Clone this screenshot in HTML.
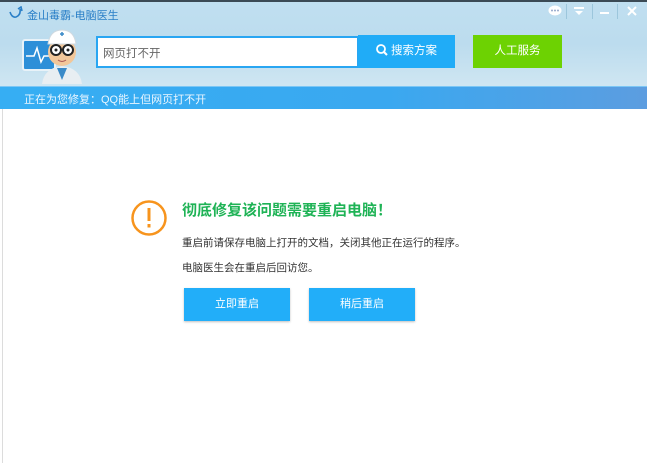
<!DOCTYPE html>
<html><head><meta charset="utf-8"><style>
*{margin:0;padding:0;box-sizing:border-box}
body{width:647px;height:463px;overflow:hidden;background:#fff;font-family:"Liberation Sans","Noto Sans CJK SC",sans-serif;position:relative}
.hdr{position:absolute;left:0;top:0;width:647px;height:86px;background:linear-gradient(180deg,#c0dff0 0%,#bcdcee 50%,#cfe6f2 100%);border-top:2px solid #3b4a55}
.title{position:absolute;left:27px;top:5px;font-size:11px;color:#2a7fc7}
.bar{position:absolute;left:0;top:86px;width:647px;height:23px;background:linear-gradient(90deg,#36aef3,#3aa8f0 60%,#5c9de0);border-top:1px solid #7cc7f5}
.bar span{position:absolute;left:24px;top:4px;font-size:11px;color:#eaf6ff}
.inp{position:absolute;left:96px;top:34px;width:263px;height:32px;background:#fff;border:2px solid #29a6f2;font-size:11.5px;color:#666;padding:7px 0 0 5px}
.sbtn{position:absolute;left:358px;top:33px;width:97px;height:33px;background:#20acf7;color:#fff;font-size:11.5px;text-align:center;line-height:33px}
.gbtn{position:absolute;left:473px;top:33px;width:89px;height:33px;background:#6dd202;color:#fff;font-size:11.5px;text-align:center;line-height:33px}
.lb{position:absolute;left:2px;top:109px;width:1px;height:354px;background:#dcdcdc}
.h1{position:absolute;left:182px;top:199px;font-size:15px;font-weight:bold;color:#1fb356}
.t{position:absolute;left:182px;font-size:10.5px;color:#333}
.b{position:absolute;top:288px;width:106px;height:33px;background:#22aef9;color:#fff;font-size:11px;text-align:center;line-height:33px;box-shadow:0 1px 2px rgba(0,0,0,.25)}
.ctl{position:absolute;top:3px;color:#fff;font-size:11px}
</style></head><body>
<div class="hdr">
<svg style="position:absolute;left:8px;top:4px" width="16" height="14"><path d="M2 6 Q4 12 8 11 Q13 9 12 3 M10 3 L13 1 L14 5" stroke="#2a7fc7" stroke-width="1.6" fill="none"/></svg>
<div class="title">金山毒霸-电脑医生</div>
<svg style="position:absolute;left:548px;top:3px" width="14" height="12"><ellipse cx="7" cy="5.5" rx="6.5" ry="5" fill="#fff"/><circle cx="4" cy="5.5" r="1" fill="#9ac"/><circle cx="7" cy="5.5" r="1" fill="#9ac"/><circle cx="10" cy="5.5" r="1" fill="#9ac"/></svg>
<div style="position:absolute;left:566px;top:2px;width:1px;height:15px;background:#9cc6dc"></div>
<svg style="position:absolute;left:573px;top:4px" width="12" height="10"><rect x="1" y="1" width="10" height="2" fill="#fff"/><path d="M2 5 L10 5 L6 9 Z" fill="#fff"/></svg>
<div style="position:absolute;left:592px;top:2px;width:1px;height:15px;background:#9cc6dc"></div>
<div style="position:absolute;left:600px;top:10px;width:9px;height:2px;background:#fff"></div>
<div style="position:absolute;left:617px;top:2px;width:1px;height:15px;background:#9cc6dc"></div>
<svg style="position:absolute;left:627px;top:4px" width="10" height="10"><path d="M1 1 L9 9 M9 1 L1 9" stroke="#fff" stroke-width="2"/></svg>
<svg style="position:absolute;left:20px;top:26px" width="68" height="56">
<rect x="3" y="12" width="32" height="30" rx="2" fill="#2d8fd8" stroke="#e8f2f8" stroke-width="2"/>
<path d="M6 28 L14 28 L17 20 L21 34 L24 28 L33 28" stroke="#fff" stroke-width="1.5" fill="none"/>
<path d="M22 56 Q24 40 42 38 Q60 40 62 56 Z" fill="#e8eef2"/>
<path d="M37 40 L42 52 L47 40 Z" fill="#3a8ac8"/>
<circle cx="42" cy="24" r="14" fill="#f2c79a"/>
<path d="M28 16 Q30 2 42 2 Q54 2 56 16 Z" fill="#fff" stroke="#cfd9e0"/>
<path d="M40 6 h4 M42 4 v4" stroke="#3a8ac8" stroke-width="1.5"/>
<circle cx="36" cy="22" r="5" fill="#fff" stroke="#222" stroke-width="2"/>
<circle cx="48" cy="22" r="5" fill="#fff" stroke="#222" stroke-width="2"/>
<circle cx="36" cy="22" r="1.5" fill="#222"/><circle cx="48" cy="22" r="1.5" fill="#222"/>
<path d="M38 32 Q42 35 46 32" stroke="#a55" fill="none"/>
</svg>
<div class="inp">网页打不开</div>
<div class="sbtn"><svg width="12" height="12" style="vertical-align:-2px;margin-right:3px"><circle cx="5" cy="5" r="4" stroke="#fff" stroke-width="1.8" fill="none"/><path d="M8 8 L11 11" stroke="#fff" stroke-width="2"/></svg>搜索方案</div>
<div class="gbtn">人工服务</div>
</div>
<div class="bar"><span>正在为您修复：QQ能上但网页打不开</span></div>
<div class="lb"></div>
<svg style="position:absolute;left:130px;top:199px" width="38" height="38"><circle cx="19" cy="19" r="16.5" stroke="#f7941d" stroke-width="2.5" fill="none"/><rect x="17.5" y="9" width="3" height="13" fill="#f7941d"/><rect x="17.5" y="25" width="3" height="3.5" fill="#f7941d"/></svg>
<div class="h1">彻底修复该问题需要重启电脑！</div>
<div class="t" style="top:235px">重启前请保存电脑上打开的文档，关闭其他正在运行的程序。</div>
<div class="t" style="top:260px">电脑医生会在重启后回访您。</div>
<div class="b" style="left:184px">立即重启</div>
<div class="b" style="left:309px">稍后重启</div>
</body></html>
